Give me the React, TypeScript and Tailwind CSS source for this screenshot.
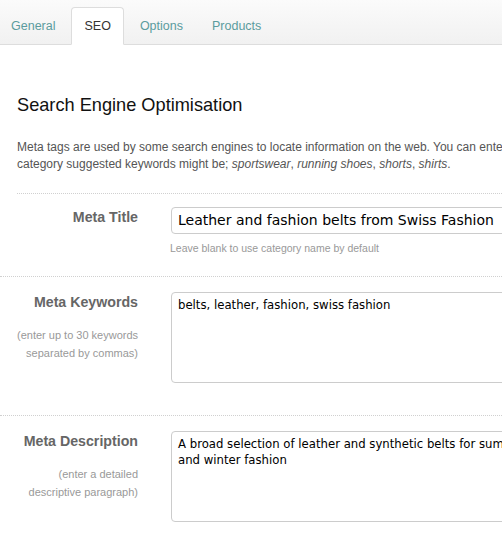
const tabs = ["General", "SEO", "Options", "Products"];

const fields = [
  {
    label: "Meta Keywords",
    hint: ["(enter up to 30 keywords", "separated by commas)"],
    value: "belts, leather, fashion, swiss fashion",
    last: false,
  },
  {
    label: "Meta Description",
    hint: ["(enter a detailed", "descriptive paragraph)"],
    value:
      "A broad selection of leather and synthetic belts for summer and winter fashion",
    last: true,
  },
];

const App = () => {
  return (
    <div className="w-[502px] h-[534px] overflow-hidden bg-white font-['Liberation_Sans',Arial,sans-serif]">
      <div className="h-[45px] bg-gradient-to-b from-[#fbfbfb] to-[#f1f1f1] border-b border-[#dddddd] flex items-end">
        <ul className="flex ml-[-2px] -mb-px">
          {tabs.map((tab) => (
            <li
              key={tab}
              className={
                tab === "SEO"
                  ? "h-[38px] px-[12px] mr-[3px] flex items-center text-[12.5px] text-[#333] bg-white border border-[#dddddd] border-b-white rounded-t-[4px]"
                  : "h-[38px] px-[12px] mr-[3px] flex items-center text-[12.5px] text-[#5b9c9e] border border-transparent"
              }
            >
              {tab}
            </li>
          ))}
        </ul>
      </div>

      <div className="pl-[17px] pt-[49px]">
        <h2 className="text-[18.2px] leading-[22px] text-[#111]">
          Search Engine Optimisation
        </h2>
        <p className="mt-[23px] text-[12px] leading-[17px] text-[#555] whitespace-nowrap pb-[20px] border-b border-dotted border-[#d0d0d0]">
          Meta tags are used by some search engines to locate information on
          the web. You can enter
          <br />
          category suggested keywords might be; <em>sportswear</em>,{" "}
          <em>running shoes</em>, <em>shorts</em>, <em>shirts</em>.
        </p>
      </div>

      <div className="flex pl-[17px] pt-[13px] pb-[22px] border-b border-dotted border-[#d0d0d0]">
        <label className="w-[121px] shrink-0 text-right text-[14.2px] leading-[20px] font-bold text-[#666] whitespace-nowrap">
          Meta Title
        </label>
        <div className="ml-[33px] shrink-0">
          <div className="w-[400px] h-[27px] border border-[#cccccc] rounded-[4px] px-[6px] flex items-center text-[14px] text-black font-['DejaVu_Sans',sans-serif] whitespace-nowrap overflow-hidden">
            Leather and fashion belts from Swiss Fashion
          </div>
          <p className="mt-[8px] -ml-px text-[10.5px] leading-[12px] text-[#999] whitespace-nowrap">
            Leave blank to use category name by default
          </p>
        </div>
      </div>

      {fields.map((f) => (
        <div
          key={f.label}
          className={
            f.last
              ? "flex pl-[17px] pt-[15px]"
              : "flex pl-[17px] pt-[15px] pb-[32px] border-b border-dotted border-[#d0d0d0]"
          }
        >
          <div className="w-[121px] shrink-0 text-right whitespace-nowrap">
            <label className="block text-[14.2px] leading-[20px] font-bold text-[#666]">
              {f.label}
            </label>
            <p className="mt-[14px] text-[11px] leading-[18px] text-[#999]">
              {f.hint[0]}
              <br />
              {f.hint[1]}
            </p>
          </div>
          <div className="ml-[33px] shrink-0 w-[365px] h-[91px] border border-[#cccccc] rounded-[4px] px-[6px] py-[4px] text-[11.7px] leading-[16px] text-black font-['DejaVu_Sans',sans-serif] overflow-hidden">
            {f.value}
          </div>
        </div>
      ))}
    </div>
  );
};

export default App;
